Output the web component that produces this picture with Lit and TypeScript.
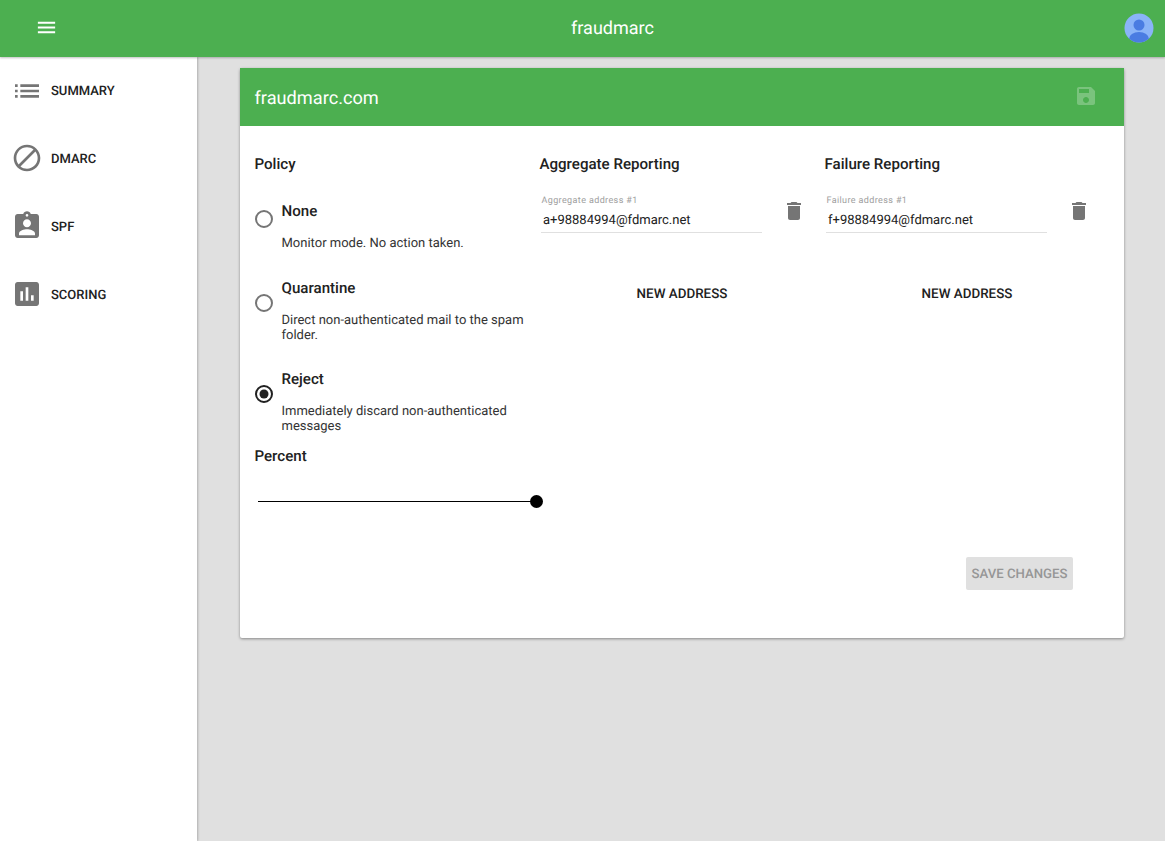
import { LitElement, html, css, svg } from "lit";
import { customElement } from "lit/decorators.js";

const ICONS: Record<string, string> = {
  menu: "M3 18h18v-2H3v2zm0-5h18v-2H3v2zm0-7v2h18V6H3z",
  list: "M3 13h2v-2H3v2zm0 4h2v-2H3v2zm0-8h2V7H3v2zm4 4h14v-2H7v2zm0 4h14v-2H7v2zM7 7v2h14V7H7z",
  block: "M12 2C6.48 2 2 6.48 2 12s4.48 10 10 10 10-4.48 10-10S17.52 2 12 2zM4 12c0-4.42 3.58-8 8-8 1.85 0 3.55.63 4.9 1.69L5.69 16.9C4.63 15.55 4 13.85 4 12zm8 8c-1.85 0-3.55-.63-4.9-1.69L18.31 7.1C19.37 8.45 20 10.15 20 12c0 4.42-3.58 8-8 8z",
  ind: "M19 3h-4.18C14.4 1.84 13.3 1 12 1c-1.3 0-2.4.84-2.82 2H5c-1.1 0-2 .9-2 2v14c0 1.1.9 2 2 2h14c1.1 0 2-.9 2-2V5c0-1.1-.9-2-2-2zm-7 0c.55 0 1 .45 1 1s-.45 1-1 1-1-.45-1-1 .45-1 1-1zm0 4c1.66 0 3 1.34 3 3s-1.34 3-3 3-3-1.34-3-3 1.34-3 3-3zm6 12H6v-1.4c0-2 4-3.1 6-3.1s6 1.1 6 3.1V19z",
  chart: "M19 3H5c-1.1 0-2 .9-2 2v14c0 1.1.9 2 2 2h14c1.1 0 2-.9 2-2V5c0-1.1-.9-2-2-2zM9 17H7v-7h2v7zm4 0h-2V7h2v10zm4 0h-2v-4h2v4z",
  del: "M6 19c0 1.1.9 2 2 2h8c1.1 0 2-.9 2-2V7H6v12zM19 4h-3.5l-1-1h-5l-1 1H5v2h14V4z",
  save: "M17 3H5c-1.11 0-2 .9-2 2v14c0 1.1.89 2 2 2h14c1.1 0 2-.9 2-2V7l-4-4zm-5 16c-1.66 0-3-1.34-3-3s1.34-3 3-3 3 1.34 3 3-1.34 3-3 3zm3-10H5V5h10v4z",
};

const icon = (name: string, size: number) => html`<svg width=${size} height=${size} viewBox="0 0 24 24" fill="currentColor" aria-hidden="true">${svg`<path d=${ICONS[name]}></path>`}</svg>`;

const NAV = [
  ["list", "SUMMARY"],
  ["block", "DMARC"],
  ["ind", "SPF"],
  ["chart", "SCORING"],
];

const POLICIES = [
  { name: "None", desc: "Monitor mode. No action taken.", checked: false },
  { name: "Quarantine", desc: "Direct non-authenticated mail to the spam folder.", checked: false },
  { name: "Reject", desc: "Immediately discard non-authenticated messages", checked: true },
];

const REPORTS = [
  { title: "Aggregate Reporting", label: "Aggregate address #1", value: "a+98884994@fdmarc.net" },
  { title: "Failure Reporting", label: "Failure address #1", value: "f+98884994@fdmarc.net" },
];

@customElement("app-root")
export class AppRoot extends LitElement {
  static styles = css`
    :host {
      display: block;
      width: 1165px;
      height: 841px;
      overflow: hidden;
      background: #e0e0e0;
      font-family: Roboto, "Liberation Sans", sans-serif;
      color: #212121;
      text-rendering: geometricPrecision;
    }
    svg { display: block; flex: none; }
    .topbar {
      position: relative;
      z-index: 2;
      height: 57px;
      box-sizing: border-box;
      padding-bottom: 1px;
      background: #4caf50;
      color: #fff;
      display: grid;
      grid-template-columns: 60px 1fr;
      align-items: center;
      box-shadow: 0 1px 2px rgba(0, 0, 0, 0.25);
    }
    .menu { padding-left: 34.5px; margin-top: -1px; }
    .brand { font-size: 18px; line-height: 24px; text-align: center; padding-top: 1px; }
    .avatar { position: absolute; right: 11px; top: 12.5px; }
    .shell { display: flex; height: 784px; }
    .side {
      width: 197px;
      flex: none;
      background: #fff;
      box-shadow: 1px 0 2px rgba(0, 0, 0, 0.22);
    }
    .nav-list { margin-top: -1px; }
    .nav {
      height: 68px;
      display: flex;
      align-items: center;
      padding-left: 11px;
      gap: 8px;
      font-size: 13px;
      font-weight: 500;
      color: #212121;
    }
    .nav span { padding-top: 2px; }
    .nav svg { color: #757575; }
    .nav:first-child svg { margin-top: 2px; }
    .main { flex: 1; padding: 11px 41px 0 43px; }
    .card {
      height: 570px;
      background: #fff;
      box-shadow: 0 1px 3px rgba(0, 0, 0, 0.4);
      border-radius: 2px;
      display: flex;
      flex-direction: column;
    }
    .card-head {
      height: 58px;
      flex: none;
      background: #4caf50;
      color: #fff;
      display: flex;
      align-items: center;
      justify-content: space-between;
      padding: 0 26px 0 14.5px;
      font-size: 18.2px;
    }
    .card-head span { padding-top: 2px; }
    .card-head svg { opacity: 0.26; margin-top: -2px; }
    .columns {
      display: grid;
      grid-template-columns: repeat(3, 285px);
      padding: 28px 0 0 14.5px;
    }
    h2 {
      margin: 0;
      font-size: 15.1px;
      line-height: 20px;
      font-weight: 500;
      color: #212121;
    }
    .options { padding-top: 27px; display: flex; flex-direction: column; gap: 27px; margin-bottom: 12px; }
    .option { display: flex; }
    .option:last-child { margin-top: -1px; }
    .radio { flex: none; width: 27px; padding-bottom: 15px; align-self: center; }
    .radio svg { color: #757575; margin-left: -1px; }
    .radio.on svg { color: #212121; }
    .opt-name { font-size: 15.1px; font-weight: 500; line-height: 20px; }
    .opt-desc { margin-top: 15px; font-size: 13px; line-height: 15px; color: #333; }
    .slider { position: relative; width: 278px; height: 14px; margin: 29px 0 0 3.5px; }
    .track { position: absolute; left: 0; right: 0; top: 6px; height: 1px; background: #000; }
    .thumb { position: absolute; right: -6.5px; top: 0; width: 13px; height: 13px; border-radius: 50%; background: #000; }
    .field-row { display: flex; align-items: flex-start; margin-top: 21px; padding-left: 1.5px; }
    .field { width: 220.5px; height: 37px; border-bottom: 1px solid #e0e0e0; }
    .field-label { font-size: 9px; line-height: 12px; letter-spacing: 0.38px; color: #9e9e9e; padding-left: 0.5px; }
    .field-value { font-size: 13px; line-height: 16px; padding: 6px 0 0 2px; color: #212121; }
    .trash { color: #757575; margin: 4px 0 0 20px; }
    .new {
      margin-top: 54px;
      text-align: center;
      font-size: 13.4px;
      font-weight: 500;
      line-height: 16px;
      color: #212121;
    }
    .actions { display: flex; justify-content: flex-end; padding-right: 51px; margin-top: auto; margin-bottom: 48px; }
    .save {
      width: 107px;
      height: 33px;
      border: 0;
      padding: 2px 0 0;
      border-radius: 2px;
      background: #e0e0e0;
      color: #969696;
      font: 500 13.2px Roboto, "Liberation Sans", sans-serif;
      text-rendering: geometricPrecision;
    }
  `;

  render() {
    return html`
      <header class="topbar">
        <div class="menu">${icon("menu", 23)}</div>
        <div class="brand">fraudmarc</div>
        <svg class="avatar" width="30" height="30" viewBox="0 0 30 30" aria-hidden="true">
          <defs><clipPath id="av"><circle cx="15" cy="15" r="14.5"></circle></clipPath></defs>
          <circle cx="15" cy="15" r="14.5" fill="#8ab4f8"></circle>
          <g clip-path="url(#av)" fill="#4a7ce2">
            <circle cx="15" cy="12" r="5.5"></circle>
            <ellipse cx="15" cy="26" rx="10" ry="7"></ellipse>
          </g>
        </svg>
      </header>
      <div class="shell">
        <nav class="side">
          <div class="nav-list">
            ${NAV.map(([i, t]) => html`<div class="nav">${icon(i, 32)}<span>${t}</span></div>`)}
          </div>
        </nav>
        <main class="main">
          <section class="card">
            <div class="card-head"><span>fraudmarc.com</span>${icon("save", 24)}</div>
            <div class="columns">
              <div>
                <h2>Policy</h2>
                <div class="options">
                  ${POLICIES.map((p) => html`
                    <div class="option">
                      <div class="radio ${p.checked ? "on" : ""}">
                        <svg width="20" height="20" viewBox="0 0 20 20" fill="none" stroke="currentColor" aria-hidden="true">
                          <circle cx="10" cy="10" r="8" stroke-width="2"></circle>
                          ${p.checked ? svg`<circle cx="10" cy="10" r="4.5" fill="currentColor" stroke="none"></circle>` : ""}
                        </svg>
                      </div>
                      <div>
                        <div class="opt-name">${p.name}</div>
                        <div class="opt-desc">${p.desc}</div>
                      </div>
                    </div>`)}
                </div>
                <h2>Percent</h2>
                <div class="slider"><div class="track"></div><div class="thumb"></div></div>
              </div>
              ${REPORTS.map((r) => html`
                <div>
                  <h2>${r.title}</h2>
                  <div class="field-row">
                    <div class="field">
                      <div class="field-label">${r.label}</div>
                      <div class="field-value">${r.value}</div>
                    </div>
                    <div class="trash">${icon("del", 24)}</div>
                  </div>
                  <div class="new">NEW ADDRESS</div>
                </div>`)}
            </div>
            <div class="actions"><button class="save">SAVE CHANGES</button></div>
          </section>
        </main>
      </div>
    `;
  }
}
